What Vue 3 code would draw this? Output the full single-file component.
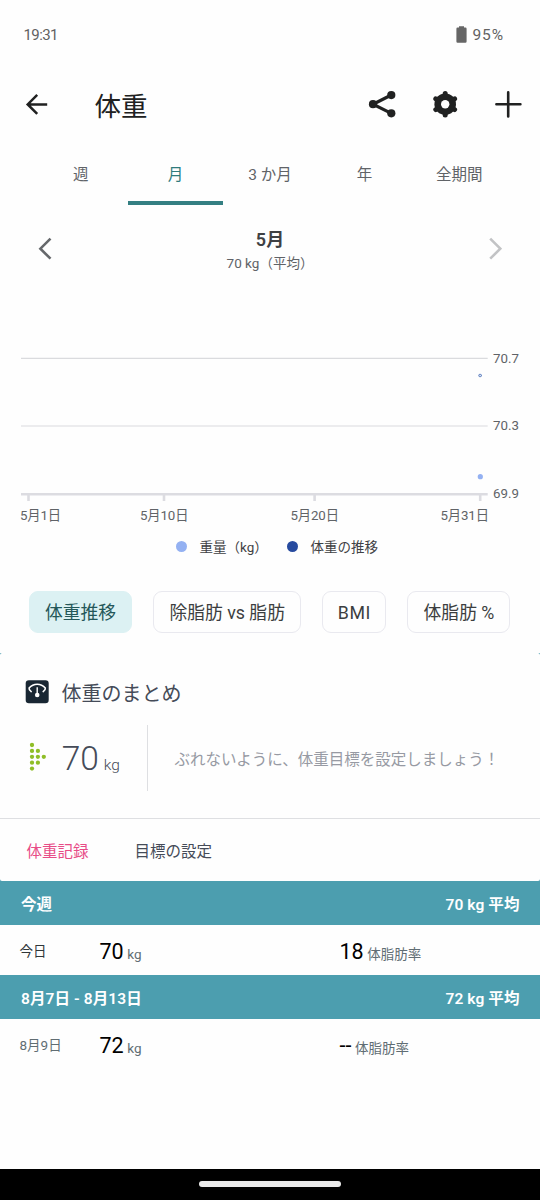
<script setup>
const tabs = ['週', '月', '3 か月', '年', '全期間']
const activeTab = '月'

const gridLines = [
  { y: 78.4, width: 1.3, label: '70.7', labelY: 83, color: '#dadbde' },
  { y: 146, width: 1.7, label: '70.3', labelY: 150.4, color: '#e6e6e9' },
  { y: 214.3, width: 2.6, label: '69.9', labelY: 218, color: '#dcdce1' },
]
const ticks = [
  { x: 28.5, label: '5月1日', labelX: 20, length: 41 },
  { x: 164, label: '5月10日', labelX: 140, length: 48.5 },
  { x: 314.6, label: '5月20日', labelX: 290.5, length: 48.5 },
  { x: 480.2, label: '5月31日', labelX: 440.5, length: 48.5 },
]
const chips = [
  { label: '体重推移', size: 'trend', active: true },
  { label: '除脂肪 vs 脂肪', size: 'lean' },
  { label: 'BMI', size: 'bmi' },
  { label: '体脂肪 %', size: 'fat' },
]
const arrowDots = [
  [3, 3], [3, 8.9], [8.9, 8.9], [3, 14.8], [8.9, 14.8], [14.8, 14.8], [3, 20.7], [8.9, 20.7], [3, 26.6],
]
const weeks = [
  { title: '今週', average: '70 kg 平均', day: '今日', today: true, weight: '70', fat: '18' },
  { title: '8月7日 - 8月13日', average: '72 kg 平均', day: '8月9日', weight: '72', fat: '--' },
]
</script>

<template>
  <div class="screen">
    <div class="status">
      <span class="clock">19:31</span>
      <span class="battery">
        <svg width="11" height="18" viewBox="0 0 11 18">
          <path d="M3 .2h5v1.4h1.4Q10.6 1.6 10.6 2.8V15.6Q10.6 16.8 9.4 16.8H1.6Q.4 16.8 .4 15.6V2.8Q.4 1.6 1.6 1.6H3Z" fill="#666" />
        </svg>
        <span class="percent">95%</span>
      </span>
    </div>

    <header class="bar">
      <svg class="back" width="24" height="24" viewBox="0 0 24 24">
        <path d="M22.2 12.4H3M12.2 2.9L2.7 12.4l9.5 9.5" fill="none" stroke="#202121" stroke-width="2.5" />
      </svg>
      <h1>体重</h1>
      <div class="actions">
        <svg width="28" height="28" viewBox="0 0 28 28">
          <path d="M23.3 5L5 14.2l18.3 9.2" fill="none" stroke="#202121" stroke-width="3.2" />
          <circle cx="5" cy="14.2" r="4.1" fill="#202121" />
          <circle cx="23.3" cy="5.1" r="4.1" fill="#202121" />
          <circle cx="23.3" cy="23.3" r="4.1" fill="#202121" />
        </svg>
        <svg width="28" height="28" viewBox="0 0 28 28">
          <path d="M14.2 3.5v21.4M4.8 8.8l18.8 10.8M4.8 19.6L23.6 8.8" stroke="#202121" stroke-width="5" stroke-linecap="round" />
          <circle cx="14.2" cy="14.2" r="10.8" fill="#202121" />
          <circle cx="14.2" cy="14.2" r="4.2" fill="#fefefe" />
        </svg>
        <svg width="28" height="28" viewBox="0 0 28 28">
          <path d="M14.2 2.4v24M2.4 14.2h24" stroke="#202121" stroke-width="2.6" stroke-linecap="round" />
        </svg>
      </div>
    </header>

    <nav class="tabs">
      <div v-for="t in tabs" :key="t" class="tab" :class="{ active: t === activeTab }">{{ t }}</div>
    </nav>

    <section class="period">
      <svg width="14" height="24" viewBox="0 0 14 24">
        <path d="M12.5 1.7L2.4 11.7l10.1 10" fill="none" stroke="#65686b" stroke-width="2.6" />
      </svg>
      <div class="period-text">
        <strong>5月</strong>
        <span>70 kg（平均）</span>
      </div>
      <svg width="14" height="24" viewBox="0 0 14 24">
        <path d="M2.2 1.7l10.1 10-10.1 10" fill="none" stroke="#c2c3c5" stroke-width="2.6" />
      </svg>
    </section>

    <svg class="chart" width="540" height="250" viewBox="0 0 540 250">
      <g v-for="g in gridLines" :key="g.label">
        <line x1="21" x2="487.7" :y1="g.y" :y2="g.y" :stroke="g.color" :stroke-width="g.width" />
        <text x="493" :y="g.labelY" textLength="26">{{ g.label }}</text>
      </g>
      <g v-for="t in ticks" :key="t.label">
        <line :x1="t.x" :x2="t.x" y1="215" y2="221" stroke="#dcdce1" stroke-width="2.6" />
        <text :x="t.labelX" y="240" :textLength="t.length">{{ t.label }}</text>
      </g>
      <rect x="478.9" y="94.4" width="2.4" height="2.2" rx=".6" fill="#fefefe" stroke="#3f68b4" stroke-width=".9" />
      <circle cx="480.3" cy="196.7" r="2.6" fill="#94b1f2" />
    </svg>

    <div class="legend">
      <i class="dot light"></i><span class="series">重量（kg）</span>
      <i class="dot dark"></i><span>体重の推移</span>
    </div>

    <div class="chips">
      <button v-for="c in chips" :key="c.label" class="chip" :class="[c.size, { active: c.active }]">{{ c.label }}</button>
    </div>

    <div class="card-backdrop">
      <div class="card">
        <section class="summary">
          <div class="summary-title">
            <svg width="24" height="24" viewBox="0 0 24 24">
              <rect x=".7" y=".2" width="23" height="23" rx="3.2" fill="#192733" />
              <path d="M6.2 11.6Q3.8 9.8 4.1 8.1 7.4 4.3 12.2 4.3T20.3 8.1Q20.6 9.8 18.2 11.6" fill="none" stroke="#fff" stroke-width="1.6" stroke-linecap="round" />
              <path d="M12.2 7.2v8" stroke="#fff" stroke-width="1.4" />
              <circle cx="12.2" cy="15" r="2.3" fill="#fff" />
            </svg>
            <h2>体重のまとめ</h2>
          </div>
          <div class="goal">
            <div class="current">
              <svg width="18" height="30" viewBox="0 0 18 30">
                <circle v-for="(d, i) in arrowDots" :key="i" :cx="d[0]" :cy="d[1]" r="2.15" fill="#8fbe27" />
              </svg>
              <span class="big">70</span><span class="big-unit">kg</span>
            </div>
            <p>ぶれないように、体重目標を設定しましょう！</p>
          </div>
        </section>

        <nav class="log-tabs">
          <span class="selected">体重記録</span>
          <span>目標の設定</span>
        </nav>
      </div>
    </div>

    <section v-for="w in weeks" :key="w.title" class="week">
      <div class="week-head"><span>{{ w.title }}</span><span>{{ w.average }}</span></div>
      <div class="entry">
        <span class="day" :class="{ today: w.today }">{{ w.day }}</span>
        <span class="measure"><b>{{ w.weight }}</b><small>kg</small></span>
        <span class="measure"><b>{{ w.fat }}</b><small>体脂肪率</small></span>
      </div>
    </section>

    <footer class="system"><div class="handle"></div></footer>
  </div>
</template>

<style>
body { margin: 0; background: #fefefe; }
</style>

<style scoped>
.screen {
  width: 540px;
  height: 1200px;
  display: flex;
  flex-direction: column;
  overflow: hidden;
  background: #fefefe;
  font-family: Roboto, "Noto Sans CJK JP", sans-serif;
  color: #606367;
}
.screen > * { flex-shrink: 0; box-sizing: border-box; }
svg { display: block; flex-shrink: 0; }
h1, h2, p { margin: 0; font-weight: 400; }
.status {
  height: 69px;
  padding: 0 37px 0 23.5px;
  display: flex;
  justify-content: space-between;
  align-items: center;
  font-size: 15px;
  color: #626262;
}
.clock { letter-spacing: -0.6px; }
.battery { display: flex; align-items: center; gap: 5px; }
.percent { font-size: 15.5px; letter-spacing: 0.9px; margin-right: -0.9px; }
.bar {
  height: 70px;
  padding: 0 18px 0 25px;
  display: flex;
  align-items: center;
}
.bar h1 {
  margin-left: 45.5px;
  padding-top: 6px;
  font-size: 26.5px;
  line-height: 40px;
  color: #202121;
}
.actions { margin-left: auto; display: flex; gap: 35px; }
.tabs {
  height: 66px;
  padding: 0 33.5px;
  display: grid;
  grid-template-columns: repeat(5, 1fr);
}
.tab {
  text-align: center;
  font-size: 15.5px;
  line-height: 72px;
  border-bottom: 4px solid transparent;
  height: 61.5px;
}
.tab.active { color: #2f7b7d; border-color: #347f82; }
.period {
  height: 75px;
  padding: 0 38px;
  display: flex;
  justify-content: space-between;
  align-items: flex-start;
}
.period svg { margin-top: 32px; }
.period-text {
  display: flex;
  flex-direction: column;
  align-items: center;
  padding-top: 23px;
}
.period-text strong { font-size: 18px; line-height: 24px; font-weight: 600; color: #3e4043; }
.period-text span { font-size: 13.5px; line-height: 22px; }
.chart text { font-size: 13.3px; fill: #606367; }
.legend {
  height: 32px;
  padding-left: 176px;
  display: flex;
  align-items: center;
  font-size: 13.5px;
  color: #3f4144;
}
.dot { width: 11px; height: 11px; border-radius: 50%; margin-right: 12.5px; flex-shrink: 0; }
.light { background: #94b1f2; }
.dark { background: #274b9f; }
.series { width: 87.5px; }
.chips {
  height: 90px;
  padding: 28.5px 29.5px 0 29px;
  display: flex;
  justify-content: space-between;
}
.chip {
  height: 42px;
  padding: 1px 0 0;
  border: 1.4px solid #e9e9ef;
  border-radius: 9px;
  background: #fefefe;
  color: #3c3e40;
  font: 400 17.8px/39px Roboto, "Noto Sans CJK JP", sans-serif;
  white-space: nowrap;
}
.chip.active { background: #dcf1f3; border-color: #dcf1f3; color: #245759; }
.trend { width: 103px; }
.lean { width: 148px; }
.bmi { width: 64px; letter-spacing: 0.5px; padding-bottom: 3px; }
.fat { width: 103px; }
.card-backdrop { background: #4c9eaf; margin-top: 1px; }
.card { background: #fefefe; border-radius: 2px; }
.summary { height: 166px; box-sizing: border-box; border-bottom: 1.5px solid #dedfe2; }
.summary-title {
  height: 72px;
  padding: 6px 0 0 25px;
  box-sizing: border-box;
  display: flex;
  align-items: center;
  gap: 12.5px;
}
h2 { font-size: 20px; line-height: 30px; padding-top: 4px; color: #454b58; }
.goal { display: flex; height: 66px; }
.current {
  width: 148px;
  box-sizing: border-box;
  padding-left: 29px;
  border-right: 1.5px solid #dedfe2;
  display: flex;
  align-items: baseline;
}
.current svg { align-self: center; margin: 0 0 2px; }
.big { font-size: 33.5px; line-height: 68px; font-weight: 300; color: #454b58; margin-left: 14.7px; }
.big-unit { font-size: 15.5px; font-weight: 300; color: #454b58; margin-left: 5px; }
.goal p { padding-left: 26.5px; font-size: 15.5px; line-height: 70px; color: #979aa3; }
.log-tabs {
  height: 62px;
  padding-left: 26.5px;
  display: flex;
  gap: 46px;
  font-size: 15.5px;
  line-height: 67px;
  color: #454b58;
}
.selected { color: #e84c87; }
.week-head {
  height: 44px;
  padding: 0 20.5px 0 21px;
  display: flex;
  justify-content: space-between;
  background: #4c9eaf;
  color: #fff;
  font-size: 15.5px;
  line-height: 48px;
  font-weight: 600;
  letter-spacing: 0.1px;
}
.entry {
  height: 49.8px;
  padding-left: 19.5px;
  display: grid;
  grid-template-columns: 80px 240px 1fr;
  align-items: baseline;
  line-height: 53px;
  color: #606d73;
}
.day { font-size: 13.5px; transform: translateY(-2.6px); }
.today { color: #30373a; }
.measure b { font-size: 21.5px; font-weight: 400; color: #000; }
.measure small { font-size: 13.5px; margin-left: 3.5px; }
.system {
  height: 31.4px;
  margin-top: auto;
  padding-top: 12.6px;
  background: #000;
}
.handle { width: 142px; height: 5.5px; margin: 0 auto; border-radius: 3px; background: #e9e9e9; }
</style>
